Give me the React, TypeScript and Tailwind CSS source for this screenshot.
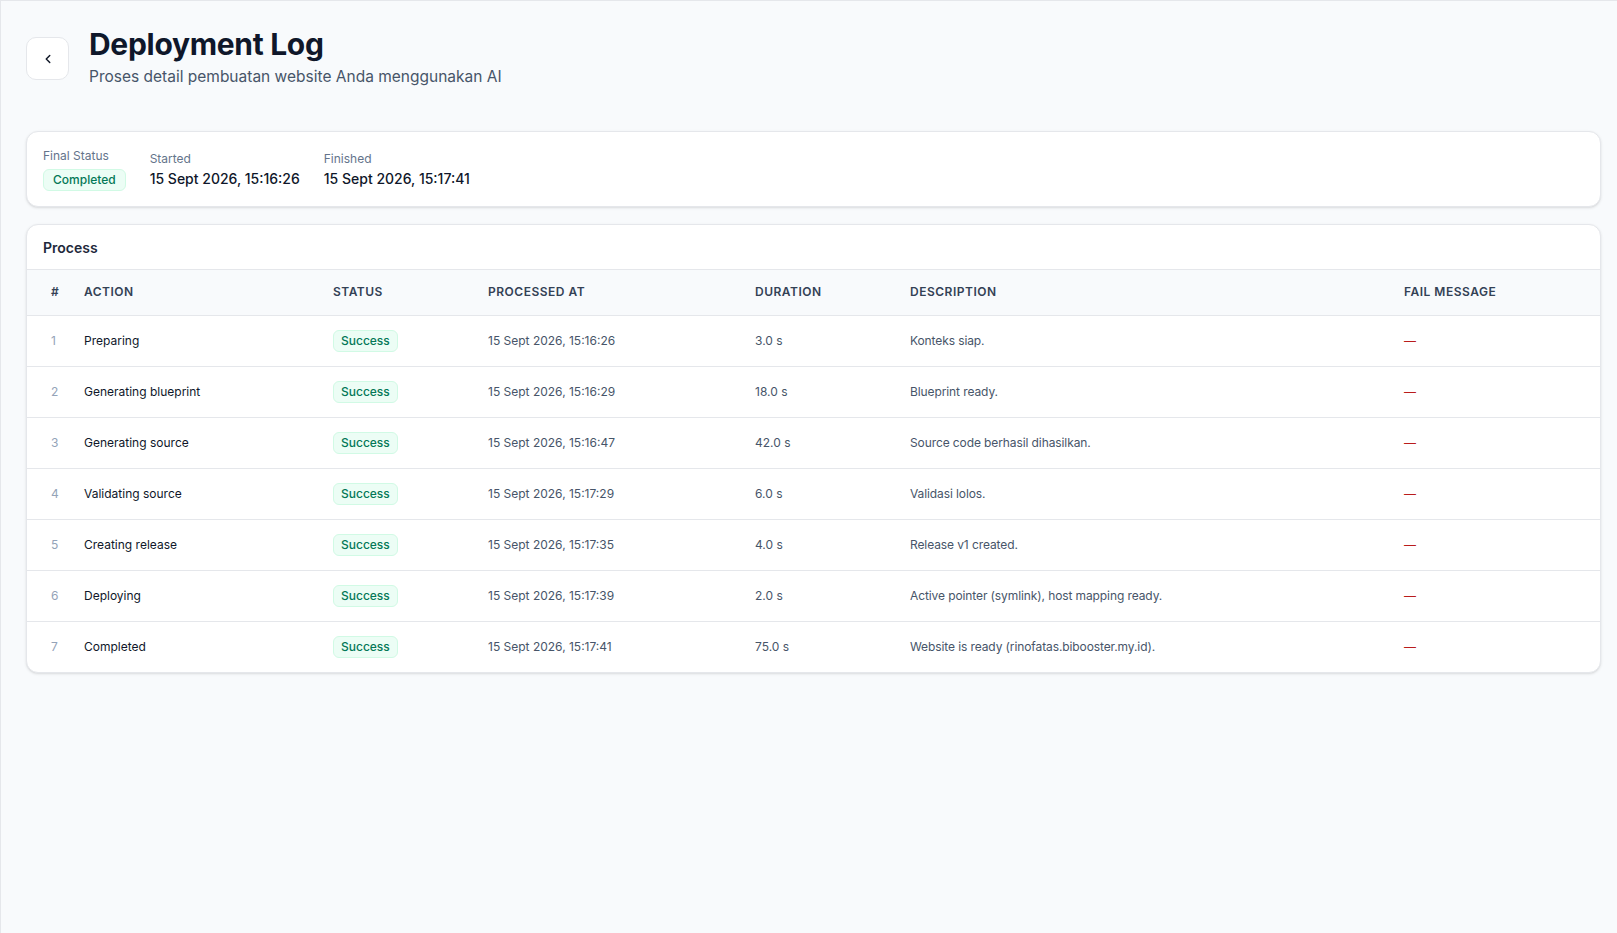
import React from "react";

const rows = [
  ["Preparing", "15 Sept 2026, 15:16:26", "3.0 s", "Konteks siap."],
  ["Generating blueprint", "15 Sept 2026, 15:16:29", "18.0 s", "Blueprint ready."],
  ["Generating source", "15 Sept 2026, 15:16:47", "42.0 s", "Source code berhasil dihasilkan."],
  ["Validating source", "15 Sept 2026, 15:17:29", "6.0 s", "Validasi lolos."],
  ["Creating release", "15 Sept 2026, 15:17:35", "4.0 s", "Release v1 created."],
  ["Deploying", "15 Sept 2026, 15:17:39", "2.0 s", "Active pointer (symlink), host mapping ready."],
  ["Completed", "15 Sept 2026, 15:17:41", "75.0 s", "Website is ready (rinofatas.bibooster.my.id)."],
];

export default function App() {
  return (
    <div className="min-h-[933px] bg-[#f8fafc] border-t border-l border-[#e5e7eb] pl-[25px] pr-[16px] pt-[36px] text-[#0f172a]" style={{ fontFamily: "Inter, 'Noto Sans', sans-serif" }}>
      <div className="flex gap-[20px]">
        <button className="w-[43px] h-[43px] rounded-[10px] border border-[#e5e7eb] bg-white flex items-center justify-center">
          <svg width="14" height="14" viewBox="0 0 24 24" fill="none" stroke="#111827" strokeWidth="2.5" strokeLinecap="round" strokeLinejoin="round"><path d="M15 18l-6-6 6-6" /></svg>
        </button>
        <div>
          <h1 className="text-[30px] leading-[36px] font-bold tracking-[-0.3px] text-[#0f172a] -mt-[11px]">Deployment Log</h1>
          <p className="text-[15.5px] leading-[24px] text-[#475569] mt-[3px]">Proses detail pembuatan website Anda menggunakan AI</p>
        </div>
      </div>

      <div className="mt-[42px] bg-white rounded-[12px] border border-[#e5e7eb] shadow-sm px-[16px] h-[76px] flex items-center gap-[24px]">
        <div>
          <div className="text-[12px] text-[#64748b] leading-[16px]">Final Status</div>
          <span className="inline-block mt-[5px] text-[12px] font-medium text-[#047857] bg-[#ecfdf5] border border-[#d1fae5] rounded-[6px] px-[9px] leading-[20px]">Completed</span>
        </div>
        <div className="pt-[1px]">
          <div className="text-[12px] text-[#64748b] leading-[16px]">Started</div>
          <div className="text-[14px] font-medium text-[#0f172a] leading-[20px] mt-[2px]">15 Sept 2026, 15:16:26</div>
        </div>
        <div className="pt-[1px]">
          <div className="text-[12px] text-[#64748b] leading-[16px]">Finished</div>
          <div className="text-[14px] font-medium text-[#0f172a] leading-[20px] mt-[2px]">15 Sept 2026, 15:17:41</div>
        </div>
      </div>

      <div className="mt-[17px] bg-white rounded-[12px] border border-[#e5e7eb] shadow-sm overflow-hidden">
        <div className="h-[45px] flex items-center px-[16px] text-[14px] font-semibold text-[#1e293b] border-b border-[#e5e7eb]">Process</div>
        <table className="w-full text-left border-collapse">
          <thead className="bg-[#f8fafc]">
            <tr className="text-[12px] font-semibold tracking-[0.5px] text-[#334155] h-[45px]">
              <th className="pl-[24px] w-[57px] font-semibold">#</th>
              <th className="w-[249px] font-semibold">ACTION</th>
              <th className="w-[155px] font-semibold">STATUS</th>
              <th className="w-[267px] font-semibold">PROCESSED AT</th>
              <th className="w-[155px] font-semibold">DURATION</th>
              <th className="w-[494px] font-semibold">DESCRIPTION</th>
              <th className="font-semibold">FAIL MESSAGE</th>
            </tr>
          </thead>
          <tbody>
            {rows.map((r, i) => (
              <tr key={i} className="h-[51px] border-t border-[#e5e7eb] text-[12px]">
                <td className="pl-[24px] text-[#94a3b8]">{i + 1}</td>
                <td className="text-[#0f172a]">{r[0]}</td>
                <td>
                  <span className="inline-block text-[12px] font-medium text-[#047857] bg-[#ecfdf5] border border-[#d1fae5] rounded-[6px] px-[7px] leading-[20px]">Success</span>
                </td>
                <td className="text-[#475569]">{r[1]}</td>
                <td className="text-[#475569]">{r[2]}</td>
                <td className="text-[#475569] tracking-[-0.1px]">{r[3]}</td>
                <td className="text-[#b91c1c]">—</td>
              </tr>
            ))}
          </tbody>
        </table>
      </div>
    </div>
  );
}
